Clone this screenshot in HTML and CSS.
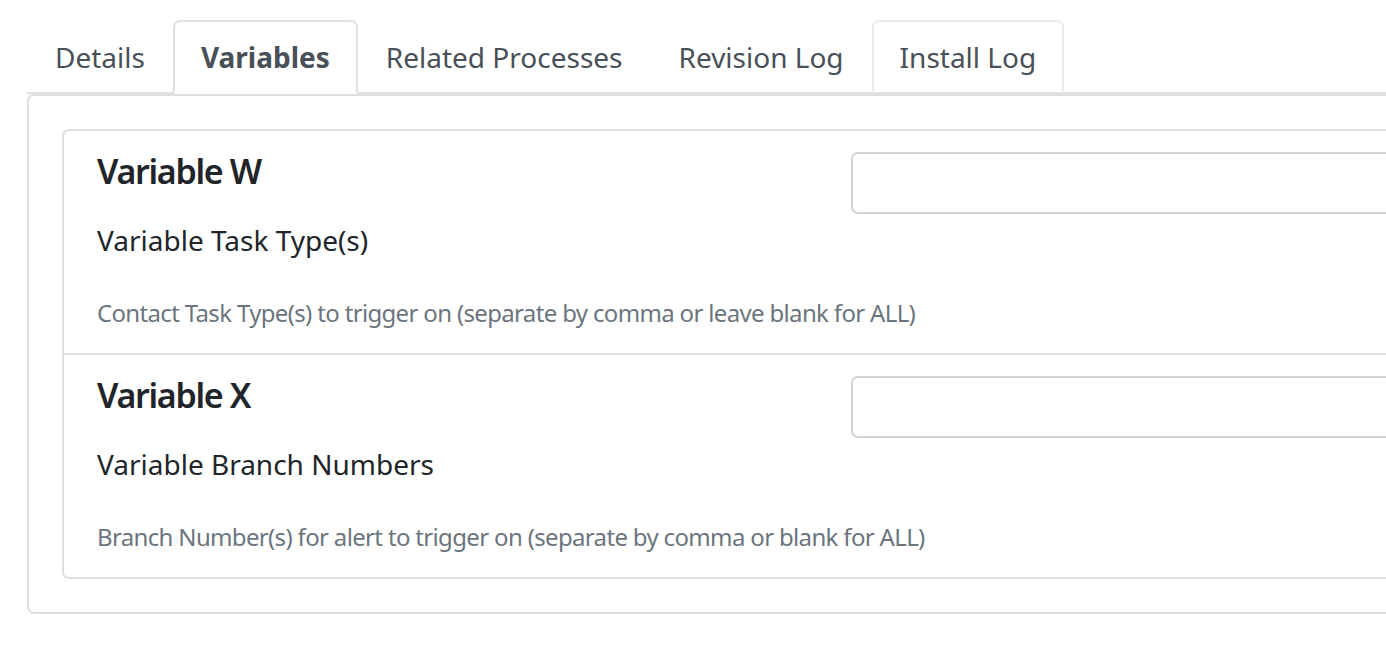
FILE: index.html
```html
<!DOCTYPE html>
<html lang="en">
<head>
  <meta charset="UTF-8" />
  <meta name="viewport" content="width=device-width, initial-scale=1.0"/>
  <title>Process Variables</title>
  <link rel="stylesheet" href="styles.css">
</head>
<body>

  <div class="page">
    <ul class="nav-tabs">
      <li><a class="nav-link" href="#">Details</a></li>
      <li><a class="nav-link active" href="#">Variables</a></li>
      <li><a class="nav-link" href="#">Related Processes</a></li>
      <li><a class="nav-link" href="#">Revision Log</a></li>
      <li><a class="nav-link hover" href="#">Install Log</a></li>
    </ul>

    <div class="tab-content">
      <ul class="list-group">
        <li class="list-item">
          <div class="var-info">
            <h5>Variable W</h5>
            <p>Variable Task Type(s)</p>
          </div>
          <input type="text" class="form-control" />
          <small class="form-text">Contact Task Type(s) to trigger on (separate by comma or leave blank for ALL)</small>
        </li>
        <li class="list-item">
          <div class="var-info">
            <h5>Variable X</h5>
            <p>Variable Branch Numbers</p>
          </div>
          <input type="text" class="form-control" />
          <small class="form-text">Branch Number(s) for alert to trigger on (separate by comma or blank for ALL)</small>
        </li>
      </ul>
    </div>
  </div>

</body>
</html>
```

FILE: styles.css
```css
html,
body {
  overflow: hidden;
}

body {
  font-family: 'Noto Sans', sans-serif;
  color: #212529;
  background: #fff;
  margin: 0;
  padding: 20px 0 0 27px;
}

.page {
  width: 1597px;
}

.nav-tabs {
  display: flex;
  list-style: none;
  margin: 0;
  padding: 0;
  border-bottom: 2px solid #dee2e6;
}

.nav-link {
  display: block;
  padding: 14px 26px;
  margin-bottom: -2px;
  font-size: 28px;
  line-height: 42px;
  color: #495057;
  text-decoration: none;
  border: 2px solid transparent;
  border-radius: 7px 7px 0 0;
}

.nav-link.active {
  font-weight: 700;
  background-color: #fff;
  border-color: #dee2e6 #dee2e6 #fff;
}

.nav-link.hover {
  border-color: #e9ecef #e9ecef #dee2e6;
}

.tab-content {
  border: 2px solid #dedede;
  border-radius: 7px;
  padding: 33px;
}

.list-group {
  list-style: none;
  margin: 0;
  padding: 0;
  border: 2px solid #dfdfdf;
  border-radius: 7px;
}

.list-item {
  display: grid;
  grid-template-columns: 754px 1fr;
  padding: 21px 33px 22px;
}

.list-item + .list-item {
  border-top: 2px solid #dfdfdf;
}

.var-info h5 {
  margin: 0;
  font-size: 34px;
  line-height: 38px;
  font-weight: 600;
  letter-spacing: -1.3px;
}

.var-info p {
  margin: 29px 0 0;
  font-size: 28px;
  line-height: 42px;
}

.form-control {
  display: block;
  box-sizing: border-box;
  width: 100%;
  height: 62px;
  margin: 0;
  padding: 10px 21px;
  font-family: inherit;
  font-size: 28px;
  border: 2px solid #ced4da;
  border-radius: 7px;
  background-color: #fff;
}

.form-text {
  grid-column: 1 / -1;
  display: block;
  margin-top: 34px;
  font-size: 24px;
  line-height: 36px;
  letter-spacing: -0.66px;
  color: #6c757d;
}
```
